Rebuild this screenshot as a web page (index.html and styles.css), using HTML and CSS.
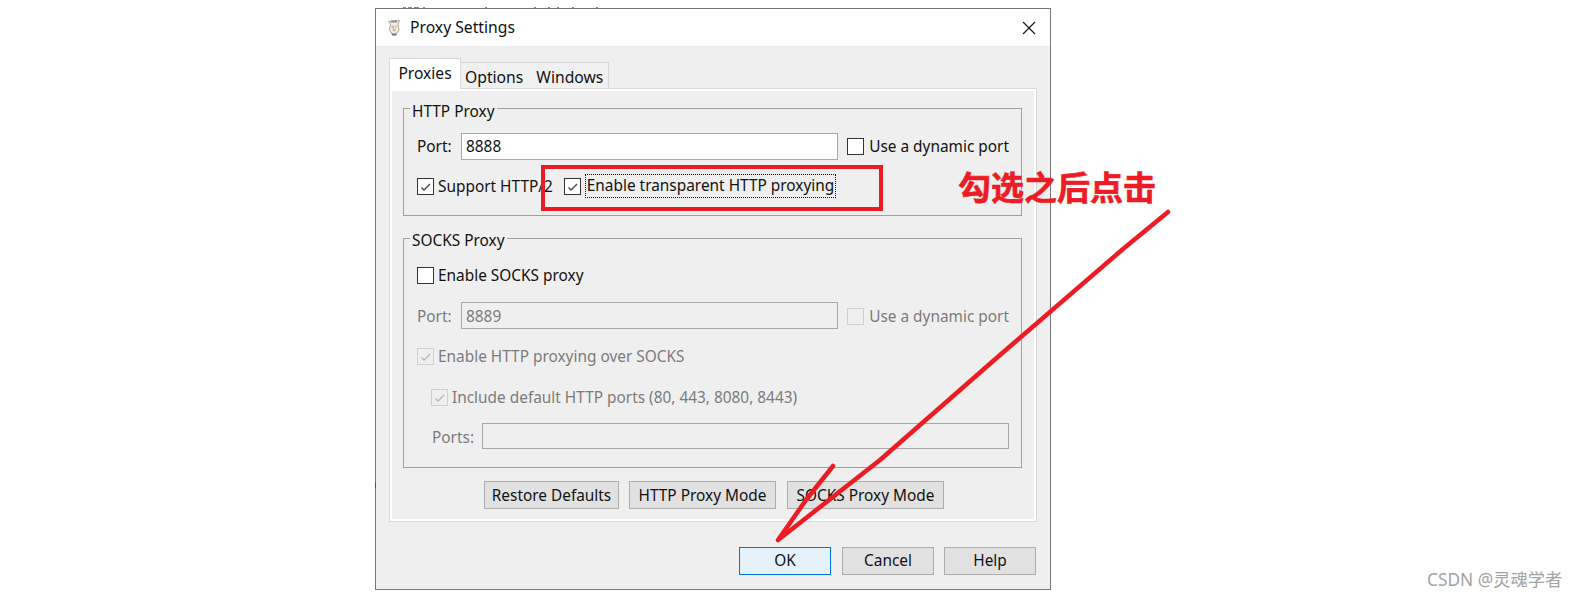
FILE: index.html
```html
<!DOCTYPE html>
<html lang="en">
<head>
<meta charset="utf-8">
<title>Proxy Settings</title>
<link rel="stylesheet" href="styles.css">
</head>
<body>
<div class="window">
  <header class="titlebar">
    <svg class="app-icon" width="14" height="18" viewBox="0 0 14 18"><path d="M1.500 2.500 L12.500 1.500 L11 5 L12 11 L9 15.500 L5 15.500 L2.500 11 L3.500 5 Z" fill="#ecece6" stroke="#a9a9a2" stroke-width="1"/><rect x="4" y="1.500" width="6" height="2" fill="#8f8f88"/><circle cx="5.800" cy="8" r="1.400" fill="#a5cfa6"/><circle cx="8.800" cy="7.600" r="1.200" fill="#e3c27e"/><circle cx="7.200" cy="11" r="1.400" fill="#dca2b4"/><rect x="5" y="14.500" width="4.500" height="2" fill="#6f6f69"/></svg>
    <span class="title">Proxy Settings</span>
    <svg class="close" width="14" height="14" viewBox="0 0 14 14"><path d="M1 1 L13 13 M13 1 L1 13" stroke="#111" stroke-width="1.1" fill="none"/></svg>
  </header>
  <div class="content">
    <div class="tabs">
      <div class="tab active">Proxies</div>
      <div class="tab-rest"><span>Options</span><span>Windows</span></div>
    </div>
    <div class="pane">
      <section class="group group-http">
        <div class="legend">HTTP Proxy</div>
        <div class="row row-port">
          <span class="lbl">Port:</span>
          <div class="input port-input">8888</div>
          <label class="check wide"><i class="box"></i>Use a dynamic port</label>
        </div>
        <div class="row row-h2">
          <label class="check"><i class="box"><svg viewBox="0 0 15 15"><path d="M3.500 8.500 L6 11 L12 5" class="tick"/></svg></i>Support HTTP/2</label>
          <label class="check check-transparent"><i class="box"><svg viewBox="0 0 15 15"><path d="M3.500 8.500 L6 11 L12 5" class="tick"/></svg></i><span class="focused">Enable transparent HTTP proxying</span></label>
        </div>
      </section>
      <section class="group group-socks disabled">
        <div class="legend">SOCKS Proxy</div>
        <div class="row row-socks1">
          <label class="check on"><i class="box"></i>Enable SOCKS proxy</label>
        </div>
        <div class="row row-port2">
          <span class="lbl">Port:</span>
          <div class="input port-input off">8889</div>
          <label class="check wide"><i class="box"></i>Use a dynamic port</label>
        </div>
        <div class="row row-over">
          <label class="check"><i class="box"><svg viewBox="0 0 15 15"><path d="M3.500 8.500 L6 11 L12 5" class="tick"/></svg></i>Enable HTTP proxying over SOCKS</label>
        </div>
        <div class="row row-inc">
          <label class="check"><i class="box"><svg viewBox="0 0 15 15"><path d="M3.500 8.500 L6 11 L12 5" class="tick"/></svg></i>Include default HTTP ports (80, 443, 8080, 8443)</label>
        </div>
        <div class="row row-ports">
          <span class="lbl">Ports:</span>
          <div class="input ports-input off"></div>
        </div>
      </section>
      <div class="pane-buttons">
        <button class="btn b-restore">Restore Defaults</button>
        <button class="btn b-http">HTTP Proxy Mode</button>
        <button class="btn b-socks">SOCKS Proxy Mode</button>
      </div>
    </div>
    <div class="dialog-buttons">
      <button class="btn b-main default">OK</button>
      <button class="btn b-main">Cancel</button>
      <button class="btn b-main b-help">Help</button>
    </div>
  </div>
</div>
<div class="red-box"></div>
<div class="note">勾选之后点击</div>
<svg class="arrow" width="1579" height="599" viewBox="0 0 1579 599">
  <path d="M403 7.500 h3 M408 7.500 h4 M414 7.500 h5 M423 7.500 h2 M485 7.500 h2 M534 7.500 h2 M548 7.500 h2 M557 7.500 h2 M572 7.500 h2 M596 7.500 h2" class="specks"/>
  <path d="M375.500 483 v5" class="speck-side"/>
  <path d="M1168 212 L1123 249 L1000 355 L880 460 L778 540 L806 500 L833 466" class="arrow-line"/>
</svg>
<div class="watermark">CSDN @灵魂学者</div>
</body>
</html>
```
FILE: styles.css
```css
* { box-sizing: border-box; }
html, body { margin: 0; padding: 0; background: #fff; }
body { width: 1579px; height: 599px; overflow: hidden; font-family: "Noto Sans", "Noto Sans CJK SC", sans-serif; font-size: 15.4px; color: #111; }
.window { width: 676px; height: 582px; margin: 8px 0 0 375px; border: 1px solid #777; display: flex; flex-direction: column; background: #efefef; }
.titlebar { height: 37px; background: #fff; display: flex; align-items: center; padding: 0 14px 0 11px; flex: none; }
.app-icon { margin-right: 9px; }
.title { flex: 1; font-size: 15.7px; padding-bottom: 2px; }
.content { flex: 1; display: flex; flex-direction: column; padding: 13px 14px 0 13px; }
.tabs { display: flex; align-items: flex-end; height: 30px; margin-bottom: -1px; position: relative; z-index: 1; }
.tab { height: 31px; width: 72px; background: #fff; border: 1px solid #d9d9d9; border-bottom: 0; display: flex; align-items: center; justify-content: center; padding-bottom: 3px; font-size: 15.6px; }
.tab-rest { height: 27px; width: 148px; border: 1px solid #d9d9d9; border-left: 0; display: flex; gap: 13px; align-items: center; padding: 2px 0 0 4px; background: #f0f0f0; font-size: 15.7px; }
.pane { height: 434px; border: 1px solid #d9d9d9; box-shadow: inset 0 0 0 2px #fff; padding: 19px 14px 0 13px; width: 648px; background: #efefef; }
.group { border: 1px solid #a0a0a0; position: relative; }
.group-http { height: 108px; padding: 0 12px 0 13px; }
.group-socks { height: 230px; margin-top: 22px; padding: 0 12px 0 13px; color: #7b7b7b; }
.legend { position: absolute; left: 6px; top: -6px; background: #efefef; padding: 0 2px; line-height: 16px; color: #111; }
.group-http .legend { top: -5px; }
.row { display: flex; align-items: center; position: relative; }
.row-port { height: 27px; margin-top: 24px; }
.row-h2 { height: 22px; margin-top: 15px; }
.row-socks1 { height: 18px; margin-top: 27px; }
.row-port2 { height: 27px; margin-top: 18px; }
.row-over { height: 18px; margin-top: 18px; }
.row-inc { height: 18px; margin-top: 23px; padding-left: 14px; }
.row-ports { height: 26px; margin-top: 17px; padding-left: 15px; }
.lbl { width: 44px; flex: none; }
.row-port2 .lbl, .row-ports .lbl { padding-top: 2px; }
.row-port2 .wide { padding-top: 2px; }
.row-ports .lbl { width: 50px; }
.input { border: 1px solid #a8a8a8; background: #fff; height: 100%; padding-left: 4px; display: flex; align-items: center; color: #111; }
.port-input { width: 378px; margin-right: 9px; }
.row-port2 .port-input { padding-top: 2px; }
.ports-input { flex: 1; }
.input.off { background: #efefef; color: #7b7b7b; }
.check { display: inline-flex; align-items: center; white-space: nowrap; }
.check.on { color: #111; }
.box { width: 17px; height: 17px; border: 1px solid #333; background: #fff; margin-right: 4px; display: block; flex: none; }
.wide .box, .check-transparent .box { margin-right: 5px; }
.box svg { display: block; width: 15px; height: 15px; }
.tick { fill: none; stroke: #444; stroke-width: 1.3; }
.disabled .box { border-color: #d0d0d0; background: #efefef; }
.disabled .tick { stroke: #b5b5b5; }
.disabled .check.on .box { border-color: #333; background: #fff; }
.check-transparent { margin-left: 11px; }
.focused { outline: 1px dotted #111; padding: 0 1px; height: 22px; line-height: 21px; }
.pane-buttons { display: flex; margin-top: 13px; padding-left: 81px; }
.btn { height: 28px; background: #e1e1e1; border: 1px solid #adadad; font: inherit; color: #111; padding: 0; }
.b-restore { width: 135px; }
.b-http { width: 147px; margin-left: 10px; }
.b-socks { width: 157px; margin-left: 11px; }
.dialog-buttons { display: flex; justify-content: flex-end; gap: 11px; margin-top: 25px; width: 647px; }
.b-main { width: 92px; padding-bottom: 2px; }
.b-help { margin-left: -1px; }
.default { background: #e5f1fb; border-color: #0078d7; }
.red-box { position: absolute; left: 541px; top: 165px; width: 342px; height: 46px; border: 4px solid #ed1c24; }
.note { position: absolute; left: 958px; top: 163px; font-family: "Noto Sans CJK SC", sans-serif; font-weight: 700; font-size: 33px; line-height: 47px; color: #ed1c24; white-space: nowrap; -webkit-text-stroke: 0.6px #ed1c24; }
.arrow { position: absolute; left: 0; top: 0; pointer-events: none; }
.arrow-line { fill: none; stroke: #ed1c24; stroke-width: 4.5; stroke-linejoin: round; stroke-linecap: round; }
.specks { fill: none; stroke: #888; stroke-width: 1; }
.speck-side { fill: none; stroke: #6b4a3a; stroke-width: 1; }
.watermark { position: absolute; left: 1427px; top: 568px; font-family: "Noto Sans", "Noto Sans CJK SC", sans-serif; font-size: 17.3px; line-height: 24px; color: #a3a3a3; white-space: nowrap; }
```
